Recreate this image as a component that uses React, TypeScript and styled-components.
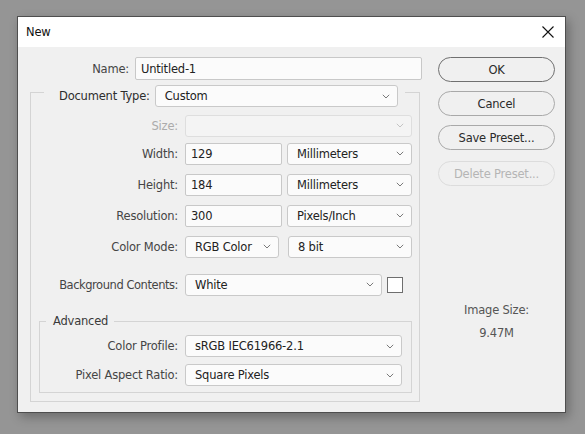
import React, { FunctionComponent } from "react";
import styled, { createGlobalStyle } from "styled-components";

const GlobalStyle = createGlobalStyle`
  html, body {
    margin: 0;
    padding: 0;
    background: #959595;
  }
  body {
    font-family: "DejaVu Sans", "Noto Sans", sans-serif;
    font-size: 11.5px;
    letter-spacing: -0.2px;
  }
`

const Page = styled.div`
  width: 585px;
  height: 434px;
  padding: 16px 0 0 17px;
  box-sizing: border-box;
`

const Dialog = styled.div`
  width: 549px;
  height: 397px;
  box-sizing: border-box;
  border: 1px solid #4e4e4e;
  background: #f0f0f0;
  box-shadow: 3px 4px 10px rgba(0, 0, 0, 0.28);
  display: flex;
  flex-direction: column;
`

const TitleBar = styled.div`
  height: 30px;
  flex: none;
  background: #fff;
  display: flex;
  align-items: center;
  justify-content: space-between;
  padding: 0 10px 0 8px;
  color: #111;
`

const CloseButton = styled.div`
  width: 14px;
  height: 14px;
  display: flex;
  align-items: center;
  justify-content: center;
`

const Body = styled.div`
  flex: 1;
  display: flex;
  padding: 10px 10px 0 12px;
  gap: 16px;
`

const LeftColumn = styled.div`
  width: 392px;
  display: flex;
  flex-direction: column;
`

const RightColumn = styled.div`
  width: 117px;
  display: flex;
  flex-direction: column;
  gap: 9px;
`

const Row = styled.div<{ $labelWidth: number; $gap?: number; $height?: number }>`
  display: flex;
  align-items: center;
  height: ${(p) => p.$height ?? 23}px;
  & > label {
    width: ${(p) => p.$labelWidth}px;
    flex: none;
    text-align: right;
    margin-right: ${(p) => p.$gap ?? 7}px;
  }
`

const Label = styled.label<{ $disabled?: boolean; $tight?: boolean }>`
  color: ${(p) => (p.$disabled ? "#ababab" : "#454545")};
  white-space: nowrap;
  letter-spacing: ${(p) => (p.$tight ? "-0.45px" : "-0.2px")};
`

const TextInput = styled.div<{ $width: number; $height?: number }>`
  width: ${(p) => p.$width}px;
  height: ${(p) => p.$height ?? 22}px;
  box-sizing: border-box;
  background: #fbfbfb;
  border: 1px solid #c8c8c8;
  border-radius: 2px;
  padding: 0 5px;
  display: flex;
  align-items: center;
  color: #222;
`

const SelectBox = styled.div<{ $width: number; $disabled?: boolean }>`
  width: ${(p) => p.$width}px;
  height: 22px;
  flex: none;
  box-sizing: border-box;
  background: ${(p) => (p.$disabled ? "#f4f4f4" : "#fbfbfb")};
  border: 1px solid ${(p) => (p.$disabled ? "#dedede" : "#c9c9c9")};
  border-radius: 3px;
  padding: 0 7px 0 9px;
  display: flex;
  align-items: center;
  justify-content: space-between;
  color: #222;
`

const Controls = styled.div<{ $gap: number }>`
  display: flex;
  align-items: center;
  gap: ${(p) => p.$gap}px;
`

const Swatch = styled.div`
  width: 16px;
  height: 16px;
  box-sizing: border-box;
  border: 1px solid #6e6e6e;
  background: #fff;
`

const Group = styled.fieldset`
  margin: 0;
  min-width: 0;
  border: 1px solid #d4d4d4;
  display: flex;
  flex-direction: column;
`

const MainGroup = styled(Group)`
  margin: 0 2px 0 0;
  padding: 0 7px 8px 8px;
`

const AdvancedGroup = styled(Group)`
  margin-top: 18px;
  padding: 7px 9px 6px 0;
  gap: 7px;
`

const MainLegend = styled.legend`
  margin-left: 5px;
  padding: 0 7px 0 15px;
  height: 14px;
`

const LegendRow = styled.div`
  display: flex;
  align-items: center;
  gap: 5px;
  color: #2d2d2d;
`

const AdvancedLegend = styled.legend`
  margin-left: 6px;
  padding: 0 6px 0 7px;
  color: #3a3a3a;
`

const Rows = styled.div`
  display: flex;
  flex-direction: column;
  margin-top: 15px;
  gap: 8px;
`

const NameRow = styled(Row)`
  margin-bottom: 5px;
`

const Button = styled.div<{ $primary?: boolean; $disabled?: boolean }>`
  height: 25px;
  box-sizing: border-box;
  border-radius: 13px;
  border: 1px solid
    ${(p) => (p.$primary ? "#707070" : p.$disabled ? "#dcdcdc" : "#a9a9a9")};
  background: #f0f0f0;
  display: flex;
  align-items: center;
  justify-content: center;
  color: ${(p) => (p.$disabled ? "#b5b5b5" : "#2a2a2a")};
`

const ImageSize = styled.div`
  margin-top: 104px;
  text-align: center;
  color: #555;
  line-height: 23px;
`

const Chevron: FunctionComponent<{ faded?: boolean }> = ({ faded }) => (
  <svg width="8" height="5" viewBox="0 0 8 5">
    <path
      d="M0.8 0.8 L4 4 L7.2 0.8"
      fill="none"
      stroke={faded ? "#c4c4c4" : "#7a7a7a"}
      strokeWidth="1"
    />
  </svg>
);

type SelectProps = {
  width: number;
  value?: string;
  disabled?: boolean;
};

const Select: FunctionComponent<SelectProps> = (props) => (
  <SelectBox $width={props.width} $disabled={props.disabled}>
    <span>{props.value}</span>
    <Chevron faded={props.disabled} />
  </SelectBox>
);

export default function App() {
  return (
    <Page>
      <GlobalStyle />
      <Dialog>
        <TitleBar>
          <span>New</span>
          <CloseButton>
            <svg width="12" height="12" viewBox="0 0 12 12">
              <path d="M0.5 0.5 L11.5 11.5 M11.5 0.5 L0.5 11.5" stroke="#111" strokeWidth="1.1" />
            </svg>
          </CloseButton>
        </TitleBar>
        <Body>
          <LeftColumn>
            <NameRow $labelWidth={99} $gap={6}>
              <Label>Name:</Label>
              <TextInput $width={287} $height={23}>Untitled-1</TextInput>
            </NameRow>
            <MainGroup>
              <MainLegend>
                <LegendRow>
                  <span>Document Type:</span>
                  <Select width={243} value="Custom" />
                </LegendRow>
              </MainLegend>
              <Rows>
                <Row $labelWidth={139} style={{ marginBottom: -3 }}>
                  <Label $disabled>Size:</Label>
                  <Select width={227} disabled />
                </Row>
                <Row $labelWidth={139}>
                  <Label>Width:</Label>
                  <Controls $gap={5}>
                    <TextInput $width={97}>129</TextInput>
                    <Select width={125} value="Millimeters" />
                  </Controls>
                </Row>
                <Row $labelWidth={139}>
                  <Label>Height:</Label>
                  <Controls $gap={5}>
                    <TextInput $width={97}>184</TextInput>
                    <Select width={125} value="Millimeters" />
                  </Controls>
                </Row>
                <Row $labelWidth={139}>
                  <Label>Resolution:</Label>
                  <Controls $gap={5}>
                    <TextInput $width={97}>300</TextInput>
                    <Select width={125} value="Pixels/Inch" />
                  </Controls>
                </Row>
                <Row $labelWidth={139}>
                  <Label>Color Mode:</Label>
                  <Controls $gap={9}>
                    <Select width={94} value="RGB Color" />
                    <Select width={124} value="8 bit" />
                  </Controls>
                </Row>
                <Row $labelWidth={139} style={{ marginTop: 7 }}>
                  <Label $tight>Background Contents:</Label>
                  <Controls $gap={5}>
                    <Select width={197} value="White" />
                    <Swatch />
                  </Controls>
                </Row>
              </Rows>
              <AdvancedGroup>
                <AdvancedLegend>Advanced</AdvancedLegend>
                <Row $labelWidth={138} $height={22}>
                  <Label>Color Profile:</Label>
                  <Select width={217} value="sRGB IEC61966-2.1" />
                </Row>
                <Row $labelWidth={138} $height={22}>
                  <Label>Pixel Aspect Ratio:</Label>
                  <Select width={217} value="Square Pixels" />
                </Row>
              </AdvancedGroup>
            </MainGroup>
          </LeftColumn>
          <RightColumn>
            <Button $primary>OK</Button>
            <Button>Cancel</Button>
            <Button>Save Preset...</Button>
            <Button $disabled style={{ marginTop: 2 }}>Delete Preset...</Button>
            <ImageSize>
              Image Size:
              <br />
              9.47M
            </ImageSize>
          </RightColumn>
        </Body>
      </Dialog>
    </Page>
  );
}
